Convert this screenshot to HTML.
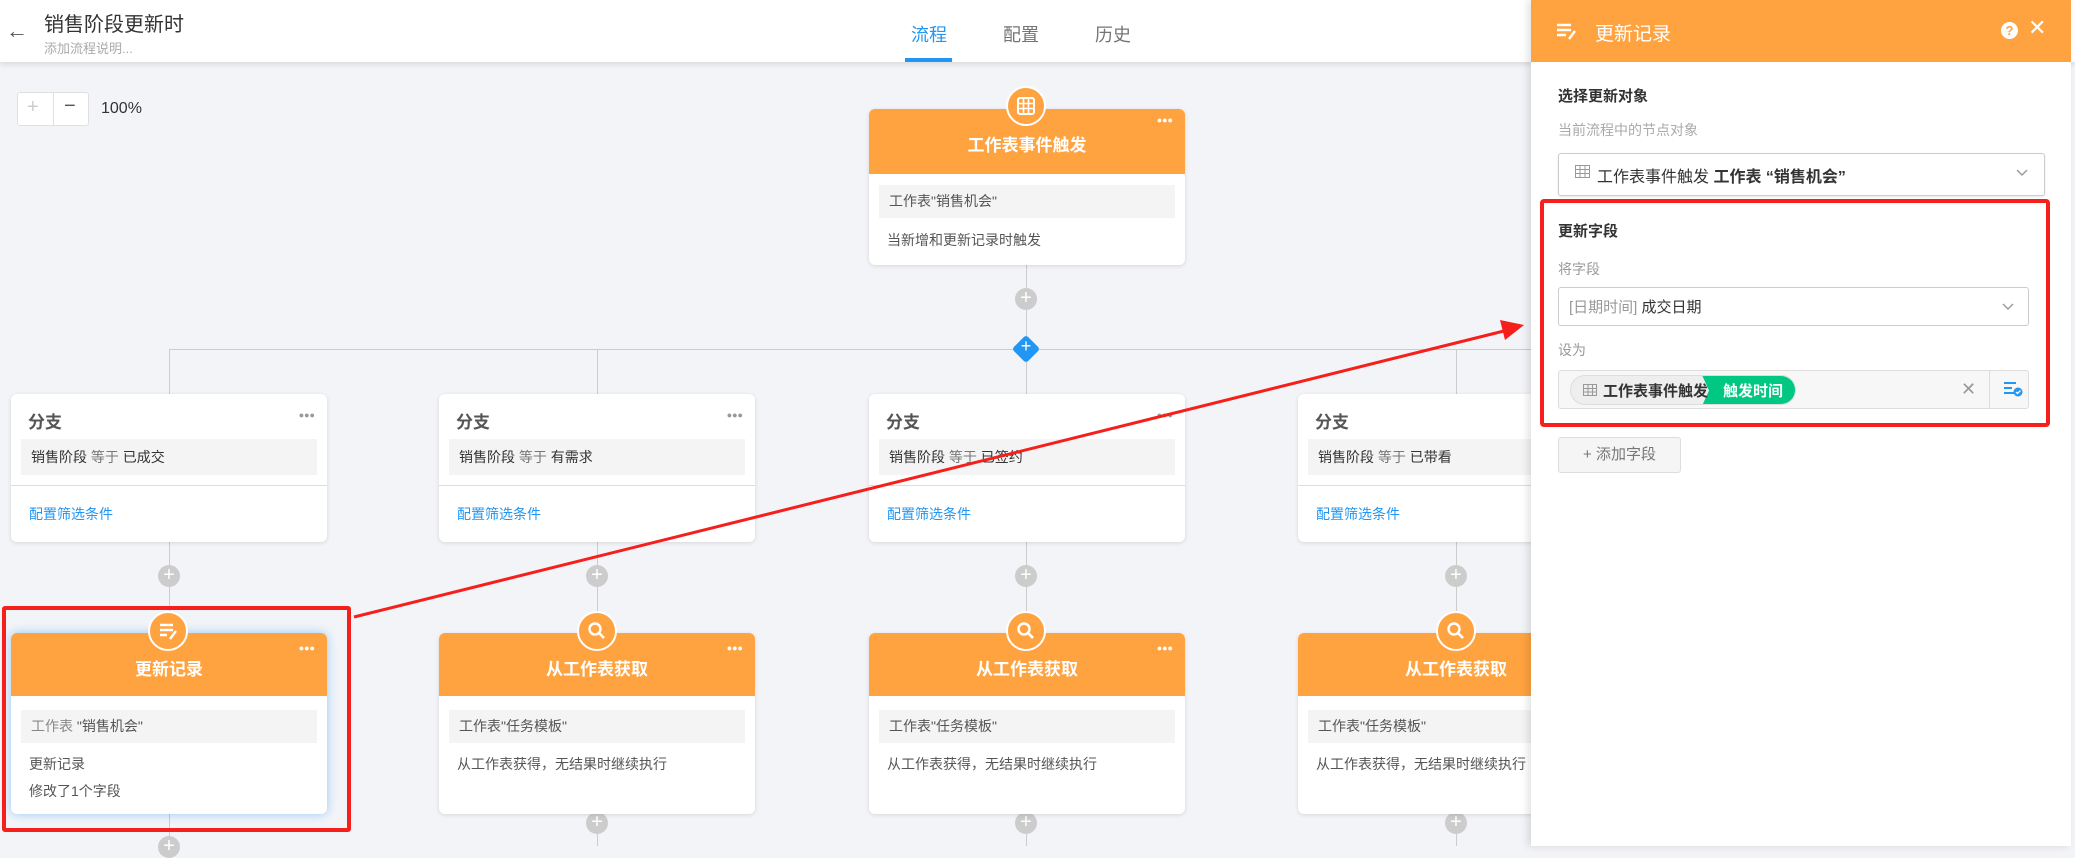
<!DOCTYPE html>
<html><head><meta charset="utf-8"><style>
*{box-sizing:border-box;margin:0;padding:0}
body{width:2075px;height:846px;overflow:hidden;background:#f3f4f8;font-family:"Liberation Sans","Noto Sans CJK SC",sans-serif;position:relative;color:#333}
.a{position:absolute}
.hdr{left:0;top:0;width:2075px;height:62px;background:#fff;box-shadow:0 2px 6px rgba(0,0,0,.12);z-index:2}
.card{position:absolute;background:#fff;border-radius:6px;box-shadow:0 1px 4px rgba(0,0,0,.12);width:316px}
.oh{background:#ffa340;border-radius:6px 6px 0 0;color:#fff;font-weight:bold;font-size:17px;text-align:center}
.gr{position:absolute;left:10px;right:10px;background:#f4f4f4;font-size:14px;color:#555;padding-left:10px}
.t{position:absolute;left:18px;font-size:14px;color:#555}
.dots{position:absolute;right:12px;font-size:9px;letter-spacing:0px;color:#fff;font-weight:bold}
.circ{position:absolute;width:40px;height:40px;border-radius:50%;background:#ffa340;border:2px solid #fff}
.plus{position:absolute;width:22px;height:22px;border-radius:50%;background:#ccc;color:#fff;font-size:20px;line-height:21px;text-align:center}
.vl{position:absolute;width:1px;background:#ccc}
.lbl{position:absolute;left:27px;font-size:14px;color:#999}
</style></head><body>
<div class="a hdr">
  <div class="a" style="left:6px;top:18px;font-size:22px;color:#555">←</div>
  <div class="a" style="left:44px;top:8px;font-size:20px;color:#333">销售阶段更新时</div>
  <div class="a" style="left:44px;top:38px;font-size:13px;color:#aaa">添加流程说明...</div>
  <div class="a" style="left:911px;top:21px;font-size:18px;color:#2196f3">流程</div>
  <div class="a" style="left:905px;top:58px;width:47px;height:4px;background:#2196f3"></div>
  <div class="a" style="left:1003px;top:21px;font-size:18px;color:#757575">配置</div>
  <div class="a" style="left:1095px;top:21px;font-size:18px;color:#757575">历史</div>
</div>
<div class="a" style="left:17px;top:92px;width:72px;height:34px;background:#fff;border:1px solid #e0e0e0;border-radius:3px"></div>
<div class="a" style="left:53px;top:92px;width:1px;height:34px;background:#e0e0e0"></div>
<div class="a" style="left:27px;top:96px;font-size:20px;color:#ccc">+</div>
<div class="a" style="left:64px;top:95px;font-size:20px;color:#555">−</div>
<div class="a" style="left:101px;top:100px;font-size:16px;color:#333">100%</div>

<div class="vl" style="left:1026px;top:265px;height:84px"></div>
<div class="a" style="left:169px;top:349px;width:1370px;height:1px;background:#ccc"></div>
<div class="vl" style="left:169px;top:349px;height:497px"></div>
<div class="vl" style="left:597px;top:349px;height:497px"></div>
<div class="vl" style="left:1026px;top:349px;height:497px"></div>
<div class="vl" style="left:1456px;top:349px;height:497px"></div>
<div class="plus" style="left:1015px;top:288px">+</div>
<div class="a" style="left:1016px;top:339px;width:20px;height:20px;background:#2196f3;transform:rotate(45deg);border-radius:3px"></div>
<div class="a" style="left:1016px;top:336px;width:20px;text-align:center;color:#fff;font-size:18px">+</div>

<div class="card" style="left:869px;top:109px;height:156px">
  <div class="oh" style="height:65px;line-height:74px">工作表事件触发</div>
  <div class="dots" style="top:6px">●●●</div>
  <div class="gr" style="top:76px;height:33px;line-height:33px">工作表"销售机会"</div>
  <div class="t" style="top:121px">当新增和更新记录时触发</div>
</div>
<div class="circ" style="left:1006px;top:86px"><svg width="36" height="36" viewBox="0 0 36 36"><rect x="10" y="10" width="16" height="16" rx="2" fill="none" stroke="#fff" stroke-width="2"/><path d="M10 15.5h16M10 20.5h16M15.5 10v16M20.5 10v16" stroke="#fff" stroke-width="1.6"/></svg></div>

<div class="card" style="left:11px;top:394px;height:148px"><div class="a" style="left:17px;top:14px;font-size:17px;font-weight:bold;color:#555">分支</div><div class="dots" style="top:16px;color:#999">●●●</div><div class="gr" style="top:45px;height:36px;line-height:36px;color:#333">销售阶段 <span style="color:#777">等于</span> 已成交</div><div class="a" style="left:0;right:0;top:91px;height:1px;background:#ddd"></div><div class="t" style="top:110px;color:#2196f3">配置筛选条件</div></div>
<div class="card" style="left:439px;top:394px;height:148px"><div class="a" style="left:17px;top:14px;font-size:17px;font-weight:bold;color:#555">分支</div><div class="dots" style="top:16px;color:#999">●●●</div><div class="gr" style="top:45px;height:36px;line-height:36px;color:#333">销售阶段 <span style="color:#777">等于</span> 有需求</div><div class="a" style="left:0;right:0;top:91px;height:1px;background:#ddd"></div><div class="t" style="top:110px;color:#2196f3">配置筛选条件</div></div>
<div class="card" style="left:869px;top:394px;height:148px"><div class="a" style="left:17px;top:14px;font-size:17px;font-weight:bold;color:#555">分支</div><div class="dots" style="top:16px;color:#999">●●●</div><div class="gr" style="top:45px;height:36px;line-height:36px;color:#333">销售阶段 <span style="color:#777">等于</span> 已签约</div><div class="a" style="left:0;right:0;top:91px;height:1px;background:#ddd"></div><div class="t" style="top:110px;color:#2196f3">配置筛选条件</div></div>
<div class="card" style="left:1298px;top:394px;height:148px"><div class="a" style="left:17px;top:14px;font-size:17px;font-weight:bold;color:#555">分支</div><div class="dots" style="top:16px;color:#999">●●●</div><div class="gr" style="top:45px;height:36px;line-height:36px;color:#333">销售阶段 <span style="color:#777">等于</span> 已带看</div><div class="a" style="left:0;right:0;top:91px;height:1px;background:#ddd"></div><div class="t" style="top:110px;color:#2196f3">配置筛选条件</div></div>

<div class="plus" style="left:158px;top:565px">+</div>
<div class="plus" style="left:586px;top:565px">+</div>
<div class="plus" style="left:1015px;top:565px">+</div>
<div class="plus" style="left:1445px;top:565px">+</div>
<div class="plus" style="left:158px;top:836px">+</div>
<div class="plus" style="left:586px;top:812px">+</div>
<div class="plus" style="left:1015px;top:812px">+</div>
<div class="plus" style="left:1445px;top:812px">+</div>

<div class="card" style="left:11px;top:633px;height:181px;box-shadow:0 0 10px rgba(33,150,243,.45)">
  <div class="oh" style="height:63px;line-height:74px">更新记录</div><div class="dots" style="top:10px">●●●</div>
  <div class="gr" style="top:77px;height:33px;line-height:33px"><span style="color:#888">工作表</span> "销售机会"</div>
  <div class="t" style="top:121px">更新记录</div><div class="t" style="top:148px">修改了1个字段</div>
</div>
<div class="circ" style="left:148px;top:611px"><svg width="36" height="36" viewBox="0 0 36 36"><path d="M10 12h13M10 17h13M10 22h7M20 26l6-8" stroke="#fff" stroke-width="2.4" fill="none"/></svg></div>
<div class="card" style="left:439px;top:633px;height:181px"><div class="oh" style="height:63px;line-height:74px">从工作表获取</div><div class="dots" style="top:10px">●●●</div><div class="gr" style="top:77px;height:33px;line-height:33px">工作表"任务模板"</div><div class="t" style="top:121px">从工作表获得，无结果时继续执行</div></div>
<div class="card" style="left:869px;top:633px;height:181px"><div class="oh" style="height:63px;line-height:74px">从工作表获取</div><div class="dots" style="top:10px">●●●</div><div class="gr" style="top:77px;height:33px;line-height:33px">工作表"任务模板"</div><div class="t" style="top:121px">从工作表获得，无结果时继续执行</div></div>
<div class="card" style="left:1298px;top:633px;height:181px"><div class="oh" style="height:63px;line-height:74px">从工作表获取</div><div class="dots" style="top:10px">●●●</div><div class="gr" style="top:77px;height:33px;line-height:33px">工作表"任务模板"</div><div class="t" style="top:121px">从工作表获得，无结果时继续执行</div></div>
<div class="circ" style="left:577px;top:611px"><svg width="36" height="36" viewBox="0 0 36 36"><circle cx="16" cy="16" r="5.5" stroke="#fff" stroke-width="2.4" fill="none"/><path d="M20 20l5 5" stroke="#fff" stroke-width="2.6"/></svg></div>
<div class="circ" style="left:1006px;top:611px"><svg width="36" height="36" viewBox="0 0 36 36"><circle cx="16" cy="16" r="5.5" stroke="#fff" stroke-width="2.4" fill="none"/><path d="M20 20l5 5" stroke="#fff" stroke-width="2.6"/></svg></div>
<div class="circ" style="left:1436px;top:611px"><svg width="36" height="36" viewBox="0 0 36 36"><circle cx="16" cy="16" r="5.5" stroke="#fff" stroke-width="2.4" fill="none"/><path d="M20 20l5 5" stroke="#fff" stroke-width="2.6"/></svg></div>

<div class="a" style="left:1531px;top:0;width:540px;height:846px;background:#fff;box-shadow:-3px 0 8px rgba(0,0,0,.12);z-index:3">
  <div class="a" style="left:0;top:0;width:540px;height:62px;background:#ffa340"></div>
  <svg class="a" style="left:24px;top:22px" width="24" height="20" viewBox="0 0 24 20"><path d="M2 3h14M2 8h14M2 13h9M14 17l6-8" stroke="#fff" stroke-width="2.4" fill="none"/></svg>
  <div class="a" style="left:64px;top:19px;font-size:19px;color:#fff">更新记录</div>
  <div class="a" style="left:470px;top:22px;width:17px;height:17px;border-radius:50%;background:#fff;color:#ffa340;font-size:13px;font-weight:bold;text-align:center;line-height:17px">?</div>
  <div class="a" style="left:497px;top:15px;font-size:22px;color:#fff">✕</div>
  <div class="a" style="left:27px;top:85px;font-size:15px;font-weight:bold;color:#333">选择更新对象</div>
  <div class="lbl" style="top:120px;color:#aaa">当前流程中的节点对象</div>
  <div class="a" style="left:27px;top:153px;width:487px;height:43px;border:1px solid #ccc;border-radius:3px;box-shadow:0 1px 2px rgba(0,0,0,.1)"></div>
  <svg class="a" style="left:44px;top:165px" width="15" height="14"><rect x=".5" y=".5" width="14" height="12" fill="none" stroke="#999"/><path d="M0 4.5h15M0 8.5h15M5 0v13M10 0v13" stroke="#999"/></svg>
  <div class="a" style="left:66px;top:163px;font-size:16px;color:#333">工作表事件触发 <b>工作表 “销售机会”</b></div>
  <svg class="a" style="left:484px;top:168px" width="14" height="10"><path d="M2 2l5 5 5-5" stroke="#999" stroke-width="1.4" fill="none"/></svg>
  <div class="a" style="left:9px;top:199px;width:510px;height:228px;border:4px solid #f5201b;border-radius:4px"></div>
  <div class="a" style="left:27px;top:220px;font-size:15px;font-weight:bold;color:#333">更新字段</div>
  <div class="lbl" style="top:259px">将字段</div>
  <div class="a" style="left:27px;top:287px;width:471px;height:39px;border:1px solid #ccc;border-radius:3px"></div>
  <div class="a" style="left:38px;top:296px;font-size:15px;color:#333"><span style="color:#999">[日期时间]</span> 成交日期</div>
  <svg class="a" style="left:470px;top:302px" width="14" height="10"><path d="M2 2l5 5 5-5" stroke="#999" stroke-width="1.4" fill="none"/></svg>
  <div class="lbl" style="top:340px">设为</div>
  <div class="a" style="left:27px;top:370px;width:471px;height:39px;border:1px solid #ddd;border-radius:3px;background:#f7f7f7"></div>
  <div class="a" style="left:458px;top:370px;width:1px;height:39px;background:#ddd"></div>
  <div class="a" style="left:39px;top:375px;width:226px;height:30px;border:1px solid #ddd;border-radius:15px;background:#eee;overflow:hidden">
    <div class="a" style="left:131px;top:-1px;width:96px;height:31px;background:#00c882;border-radius:0 15px 15px 0;clip-path:polygon(0 0,100% 0,100% 100%,0 100%,7px 50%)"></div>
  </div>
  <svg class="a" style="left:52px;top:384px" width="14" height="12"><rect x=".5" y=".5" width="13" height="11" fill="none" stroke="#999"/><path d="M0 4.5h14M0 8h14M5 0v12M9.5 0v12" stroke="#999"/></svg>
  <div class="a" style="left:72px;top:380px;font-size:15px;font-weight:bold;color:#333">工作表事件触发</div>
  <div class="a" style="left:192px;top:380px;font-size:15px;font-weight:bold;color:#fff">触发时间</div>
  <div class="a" style="left:430px;top:379px;font-size:18px;color:#999">✕</div>
  <svg class="a" style="left:472px;top:380px" width="20" height="18"><path d="M1 3h12M1 8h8M1 13h12" stroke="#2196f3" stroke-width="2"/><circle cx="15" cy="12" r="4.5" fill="#2196f3"/><path d="M13 12l1.5 1.5 3-3" stroke="#fff" stroke-width="1.3" fill="none"/></svg>
  <div class="a" style="left:27px;top:437px;width:123px;height:36px;border:1px solid #ddd;border-radius:3px;background:#f5f5f5;font-size:15px;color:#777;text-align:center;line-height:34px">+ 添加字段</div>
</div>

<div class="a" style="left:2px;top:606px;width:349px;height:226px;border:4px solid #f5201b;border-radius:3px;z-index:4"></div>
<svg class="a" style="left:0;top:0;z-index:4" width="1531" height="846"><path d="M354 617L1508 330" stroke="#f5201b" stroke-width="3"/><path d="M1524 325L1500 320L1505 340Z" fill="#f5201b"/></svg>
</body></html>
